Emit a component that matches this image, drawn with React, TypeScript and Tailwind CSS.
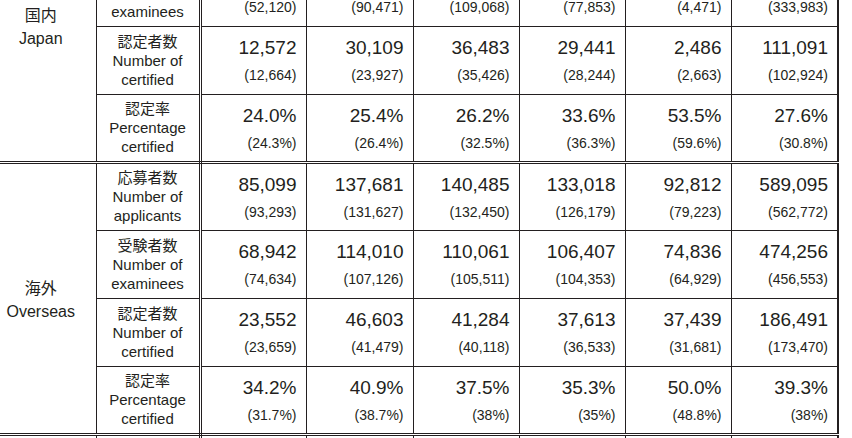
type Row = { ja: string; en: string[]; vals: [string, string][] };

const japan: Row[] = [
  {
    ja: "応募者数",
    en: ["Number of", "applicants"],
    vals: [
      ["\u00a0", "\u00a0"],
      ["\u00a0", "\u00a0"],
      ["\u00a0", "\u00a0"],
      ["\u00a0", "\u00a0"],
      ["\u00a0", "\u00a0"],
      ["\u00a0", "\u00a0"],
    ],
  },
  {
    ja: "受験者数",
    en: ["Number of", "examinees"],
    vals: [
      ["\u00a0", "(52,120)"],
      ["\u00a0", "(90,471)"],
      ["\u00a0", "(109,068)"],
      ["\u00a0", "(77,853)"],
      ["\u00a0", "(4,471)"],
      ["\u00a0", "(333,983)"],
    ],
  },
  {
    ja: "認定者数",
    en: ["Number of", "certified"],
    vals: [
      ["12,572", "(12,664)"],
      ["30,109", "(23,927)"],
      ["36,483", "(35,426)"],
      ["29,441", "(28,244)"],
      ["2,486", "(2,663)"],
      ["111,091", "(102,924)"],
    ],
  },
  {
    ja: "認定率",
    en: ["Percentage", "certified"],
    vals: [
      ["24.0%", "(24.3%)"],
      ["25.4%", "(26.4%)"],
      ["26.2%", "(32.5%)"],
      ["33.6%", "(36.3%)"],
      ["53.5%", "(59.6%)"],
      ["27.6%", "(30.8%)"],
    ],
  },
];

const overseas: Row[] = [
  {
    ja: "応募者数",
    en: ["Number of", "applicants"],
    vals: [
      ["85,099", "(93,293)"],
      ["137,681", "(131,627)"],
      ["140,485", "(132,450)"],
      ["133,018", "(126,179)"],
      ["92,812", "(79,223)"],
      ["589,095", "(562,772)"],
    ],
  },
  {
    ja: "受験者数",
    en: ["Number of", "examinees"],
    vals: [
      ["68,942", "(74,634)"],
      ["114,010", "(107,126)"],
      ["110,061", "(105,511)"],
      ["106,407", "(104,353)"],
      ["74,836", "(64,929)"],
      ["474,256", "(456,553)"],
    ],
  },
  {
    ja: "認定者数",
    en: ["Number of", "certified"],
    vals: [
      ["23,552", "(23,659)"],
      ["46,603", "(41,479)"],
      ["41,284", "(40,118)"],
      ["37,613", "(36,533)"],
      ["37,439", "(31,681)"],
      ["186,491", "(173,470)"],
    ],
  },
  {
    ja: "認定率",
    en: ["Percentage", "certified"],
    vals: [
      ["34.2%", "(31.7%)"],
      ["40.9%", "(38.7%)"],
      ["37.5%", "(38%)"],
      ["35.3%", "(35%)"],
      ["50.0%", "(48.8%)"],
      ["39.3%", "(38%)"],
    ],
  },
];

function Section({ ja, en, rows }: { ja: string; en: string; rows: Row[] }) {
  return (
    <>
      {rows.map((row, i) => {
        const last = i === rows.length - 1;
        const bottom = last
          ? "border-b-[3px] border-b-[#231f20] border-double"
          : "border-b border-b-[#231f20]";
        return (
          <tr key={i} className="h-[68px]">
            {i === 0 && (
              <td
                rowSpan={rows.length}
                className="border-r border-r-[#231f20] border-b-[3px] border-b-[#231f20] border-double p-0 pt-[3px] text-center align-middle text-[16px] leading-[23px]"
              >
                <div>{ja}</div>
                <div>{en}</div>
              </td>
            )}
            <td
              className={`${bottom} border-r-[3px] border-r-[#231f20] border-double p-0 text-center align-middle text-[15px] leading-[19px]`}
            >
              <div>{row.ja}</div>
              {row.en.map((t) => (
                <div key={t}>{t}</div>
              ))}
            </td>
            {row.vals.map(([big, small], j) => (
              <td
                key={j}
                className={`${bottom} ${
                  j === row.vals.length - 1
                    ? "border-r-2 border-r-[#231f20]"
                    : "border-r border-r-[#231f20]"
                } p-0 pr-[9px] text-right align-top`}
              >
                <div className="pt-[9px] text-[19px] leading-[24px]">{big}</div>
                <div className="mt-[5px] text-[14px] leading-[20px]">{small}</div>
              </td>
            ))}
          </tr>
        );
      })}
    </>
  );
}

export default function App() {
  return (
    <div className="h-[438px] w-[852px] overflow-hidden bg-white font-['Liberation_Sans','Noto_Sans_CJK_JP',sans-serif] text-[#231f20]">
      <table className="-mt-[110px] -ml-[14px] table-fixed border-collapse">
        <colgroup>
          <col className="w-[110px]" />
          <col className="w-[104px]" />
          <col className="w-[106px]" />
          <col className="w-[107px]" />
          <col className="w-[106px]" />
          <col className="w-[106px]" />
          <col className="w-[106px]" />
          <col className="w-[107px]" />
        </colgroup>
        <tbody>
          <Section ja="国内" en="Japan" rows={japan} />
          <Section ja="海外" en="Overseas" rows={overseas} />
          <tr className="h-[68px]">
            <td className="border-r border-r-[#231f20] p-0" />
            <td className="border-r-[3px] border-r-[#231f20] border-double p-0" />
            {[0, 1, 2, 3, 4].map((k) => (
              <td key={k} className="border-r border-r-[#231f20] p-0" />
            ))}
            <td className="border-r-2 border-r-[#231f20] p-0" />
          </tr>
        </tbody>
      </table>
    </div>
  );
}
